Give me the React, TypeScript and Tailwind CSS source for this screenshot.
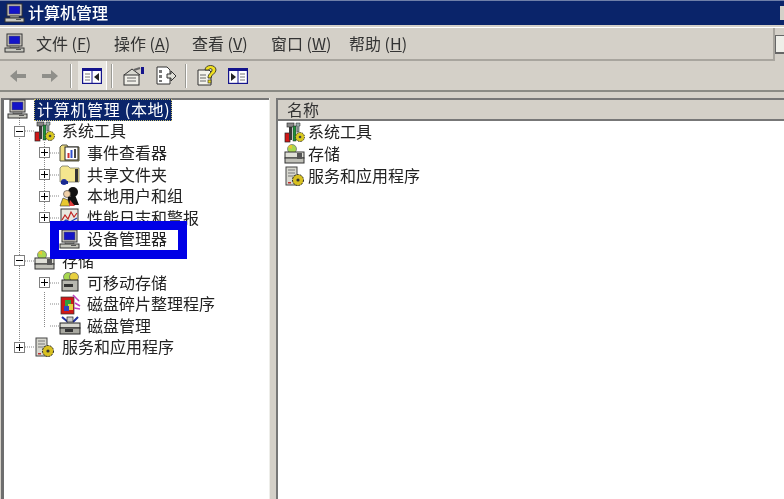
// Computer Management window, Windows 2003 style, with device manager highlighted
import React from "react";

const FONT = "font-['Noto_Sans_CJK_SC','Liberation_Sans',sans-serif]";

function ComputerIcon() {
  return (
    <svg width="22" height="21" viewBox="0 0 22 21" className="shrink-0">
      <rect x="3" y="1" width="15" height="12" fill="#d4d0c8" stroke="#333" />
      <rect x="5" y="3" width="11" height="8" fill="#1414c8" stroke="#555" strokeWidth="0.6" />
      <rect x="6" y="13" width="9" height="2" fill="#999" stroke="#444" strokeWidth="0.5" />
      <rect x="1" y="15" width="19" height="4" fill="#c8c8c0" stroke="#333" />
      <rect x="12" y="16" width="5" height="1" fill="#555" />
    </svg>
  );
}

function ToolsIcon() {
  return (
    <svg width="22" height="21" viewBox="0 0 22 21" className="shrink-0">
      <rect x="1" y="11" width="5" height="9" fill="#d01818" stroke="#222" strokeWidth="0.7" />
      <rect x="5" y="2" width="3" height="16" fill="#3a3a3a" />
      <rect x="3" y="1" width="7" height="4" fill="#888" stroke="#222" strokeWidth="0.6" />
      <rect x="9" y="4" width="3" height="15" fill="#1f8f3a" stroke="#222" strokeWidth="0.5" />
      <path d="M12 1h4v3h-1v6h-2V4h-1z" fill="#9aa" stroke="#222" strokeWidth="0.5" />
      <circle cx="16" cy="15" r="4.5" fill="#d8c820" stroke="#333" strokeDasharray="1.5 1" />
      <circle cx="16" cy="15" r="1.3" fill="#444" />
    </svg>
  );
}

function EventIcon() {
  return (
    <svg width="22" height="21" viewBox="0 0 22 21" className="shrink-0">
      <path d="M1 5l2-2h5l1 2h11v14H1z" fill="#f0de80" stroke="#554" />
      <rect x="6" y="5" width="13" height="13" fill="#fff" stroke="#222" />
      <rect x="8.5" y="11" width="2" height="5" fill="#d03030" />
      <rect x="11.5" y="8" width="2" height="8" fill="#3050d0" />
      <rect x="15" y="7" width="2" height="9" fill="#444" />
    </svg>
  );
}

function FolderIcon() {
  return (
    <svg width="22" height="21" viewBox="0 0 22 21" className="shrink-0">
      <path d="M1 4l2-2h6l2 2h9v14H1z" fill="#f4e68e" stroke="#776" strokeWidth="0.8" />
      <rect x="16" y="5" width="3" height="13" fill="#333" />
      <circle cx="5" cy="18" r="3" fill="#2030a0" />
      <rect x="2" y="17" width="7" height="3" fill="#1a2a90" />
    </svg>
  );
}

function UsersIcon() {
  return (
    <svg width="22" height="21" viewBox="0 0 22 21" className="shrink-0">
      <circle cx="14" cy="6" r="5" fill="#111" />
      <circle cx="8" cy="8" r="3.5" fill="#f0d0a8" stroke="#333" strokeWidth="0.6" />
      <path d="M9 11l7-2 4 10H8z" fill="#111" />
      <path d="M1 20l3-8 5 2 2 6z" fill="#e8c830" stroke="#333" strokeWidth="0.6" />
      <path d="M11 14l5 6h-6z" fill="#e04040" />
    </svg>
  );
}

function PerfIcon() {
  return (
    <svg width="22" height="21" viewBox="0 0 22 21" className="shrink-0">
      <rect x="2" y="2" width="17" height="17" fill="#e8e8e0" stroke="#333" />
      <path d="M3 13l3-5 3 4 3-7 3 5 3-4" fill="none" stroke="#c02020" strokeWidth="1.2" />
      <path d="M3 16l4-3 4 2 7-4" fill="none" stroke="#2040b0" strokeWidth="1.2" />
    </svg>
  );
}

function StorageIcon() {
  return (
    <svg width="22" height="21" viewBox="0 0 22 21" className="shrink-0">
      <circle cx="8" cy="5" r="4.5" fill="#a8d850" stroke="#667" strokeWidth="0.7" />
      <path d="M4 3a4 4 0 0 1 4-2v4z" fill="#e8c830" />
      <rect x="1" y="8" width="19" height="6" fill="#e0e0d8" stroke="#333" />
      <rect x="1" y="14" width="19" height="5" fill="#c0c0b8" stroke="#333" />
      <rect x="13" y="9" width="5" height="6" fill="#555" />
    </svg>
  );
}

function RemovableIcon() {
  return (
    <svg width="22" height="21" viewBox="0 0 22 21" className="shrink-0">
      <circle cx="9" cy="5" r="4.5" fill="#a8d850" stroke="#556" strokeWidth="0.7" />
      <circle cx="15" cy="5" r="4.5" fill="#e8d040" stroke="#556" strokeWidth="0.7" />
      <rect x="3" y="8" width="16" height="11" fill="#b8b8b0" stroke="#222" />
      <rect x="5" y="12" width="9" height="3" fill="#333" />
    </svg>
  );
}

function DefragIcon() {
  return (
    <svg width="22" height="21" viewBox="0 0 22 21" className="shrink-0">
      <rect x="2" y="3" width="13" height="17" fill="#d01818" stroke="#333" strokeWidth="0.7" />
      <rect x="6" y="6" width="6" height="6" fill="#30a040" />
      <rect x="9" y="10" width="5" height="6" fill="#e8d040" />
      <rect x="5" y="12" width="5" height="5" fill="#3040c0" />
      <path d="M14 1l6 6M16 9l5 3M15 14l6 1" stroke="#c040c0" strokeWidth="1.6" />
    </svg>
  );
}

function DiskIcon() {
  return (
    <svg width="22" height="21" viewBox="0 0 22 21" className="shrink-0">
      <path d="M3 2l6 5M19 2l-5 5" stroke="#2030a0" strokeWidth="2" />
      <rect x="8" y="2" width="6" height="5" fill="#ccc" stroke="#222" strokeWidth="0.7" />
      <rect x="1" y="8" width="20" height="5" fill="#d8d8d0" stroke="#222" />
      <rect x="1" y="13" width="20" height="6" fill="#a8a8a0" stroke="#222" />
      <rect x="6" y="14" width="8" height="3" fill="#333" />
    </svg>
  );
}

function ServicesIcon() {
  return (
    <svg width="22" height="21" viewBox="0 0 22 21" className="shrink-0">
      <rect x="2" y="1" width="11" height="18" fill="#d8d8d0" stroke="#444" />
      <path d="M4 4h7M4 7h7M4 10h7" stroke="#777" />
      <circle cx="14" cy="14" r="5.5" fill="#d8c020" stroke="#222" strokeDasharray="2 1" />
      <circle cx="14" cy="14" r="1.6" fill="#333" />
      <rect x="4" y="16" width="3" height="1.5" fill="#c03030" />
    </svg>
  );
}

function Expander({ open }: { open?: boolean }) {
  return (
    <span className="relative flex h-[11px] w-[11px] shrink-0 items-center justify-center border border-[#808080] bg-white">
      <span className="absolute h-px w-[7px] bg-black" />
      {!open && <span className="absolute h-[7px] w-px bg-black" />}
    </span>
  );
}

const MENU = [
  { label: "文件", key: "F", width: "w-[78px]" },
  { label: "操作", key: "A", width: "w-[78px]" },
  { label: "查看", key: "V", width: "w-[79px]" },
  { label: "窗口", key: "W", width: "w-[78px]" },
  { label: "帮助", key: "H", width: "w-[78px]" },
];

interface TreeRow {
  label: string;
  icon: React.ReactNode;
  level: 1 | 2;
  expander?: "open" | "closed";
}

const TREE: TreeRow[] = [
  { label: "系统工具", icon: <ToolsIcon />, level: 1, expander: "open" },
  { label: "事件查看器", icon: <EventIcon />, level: 2, expander: "closed" },
  { label: "共享文件夹", icon: <FolderIcon />, level: 2, expander: "closed" },
  { label: "本地用户和组", icon: <UsersIcon />, level: 2, expander: "closed" },
  { label: "性能日志和警报", icon: <PerfIcon />, level: 2, expander: "closed" },
  { label: "设备管理器", icon: <ComputerIcon />, level: 2 },
  { label: "存储", icon: <StorageIcon />, level: 1, expander: "open" },
  { label: "可移动存储", icon: <RemovableIcon />, level: 2, expander: "closed" },
  { label: "磁盘碎片整理程序", icon: <DefragIcon />, level: 2 },
  { label: "磁盘管理", icon: <DiskIcon />, level: 2 },
  { label: "服务和应用程序", icon: <ServicesIcon />, level: 1, expander: "closed" },
];

function Row({ row }: { row: TreeRow }) {
  return (
    <div className={row.level === 1 ? "flex h-[21.6px] items-center pl-[9px]" : "flex h-[21.6px] items-center pl-[34px]"}>
      <span className="flex w-[20px] shrink-0 items-center">
        {row.expander && <Expander open={row.expander === "open"} />}
      </span>
      <span className="flex w-[28px] shrink-0 items-center">{row.icon}</span>
      <span className="block whitespace-nowrap pb-[2px]">{row.label}</span>
    </div>
  );
}

function Separator({ className }: { className: string }) {
  return <div className={`h-[24px] w-[2px] border-r border-white bg-[#9a9a94] ${className}`} />;
}

export default function App() {
  return (
    <div className={`${FONT} flex h-[499px] w-[784px] flex-col overflow-hidden bg-[#d4d0c8] text-[16px] leading-none text-[#222] blur-[0.4px]`}>
      {/* title bar */}
      <div className="flex h-[25px] shrink-0 items-center justify-between border-t border-[#6f7fa8] bg-[#0a246a] pl-[4px] text-white">
        <div className="flex items-center gap-[2px]">
          <ComputerIcon />
          <span className="block pb-[3px] font-medium">计算机管理</span>
        </div>
        <div className="h-[14px] w-[4px] bg-[#d4d0c8]" />
      </div>

      {/* menu bar */}
      <div className="mt-[2px] flex h-[34px] shrink-0 border-t border-white">
        <div className="flex flex-1 items-center border-b-2 border-r-2 border-[#a8a59e] pl-[4px]">
          <ComputerIcon />
          <div className="ml-[10px] flex pb-[2px]">
            {MENU.map((m) => (
              <span key={m.key} className={`${m.width} block whitespace-nowrap text-[#333]`}>
                {m.label} (<u className="underline underline-offset-1">{m.key}</u>)
              </span>
            ))}
          </div>
        </div>
        <div className="flex w-[9px] items-end pb-[7px]">
          <div className="h-[19px] w-full border-b-2 border-l border-t border-[#666] bg-[#eeeee8]" />
        </div>
      </div>

      {/* toolbar */}
      <div className="flex h-[31px] shrink-0 items-center border-b-2 border-[#8a8a84] pl-[9px]">
        <svg width="18" height="14" viewBox="0 0 18 14" className="shrink-0">
          <path d="M8 1L1 7l7 6V9h9V5H8z" fill="#8f8f8a" />
        </svg>
        <svg width="18" height="14" viewBox="0 0 18 14" className="ml-[14px] shrink-0">
          <path d="M10 1l7 6-7 6V9H1V5h9z" fill="#8f8f8a" />
        </svg>
        <Separator className="ml-[11px]" />
        <div className="ml-[6px] flex h-[29px] w-[29px] items-center justify-center border-r border-white bg-[#e8e6e0]">
          <svg width="20" height="16" viewBox="0 0 20 16">
            <rect x="0.5" y="0.5" width="19" height="15" fill="#fff" stroke="#14148c" strokeWidth="1.4" />
            <rect x="1" y="1" width="18" height="2" fill="#14148c" />
            <path d="M10 3v12" stroke="#14148c" />
            <path d="M3 6h5M3 9h5M3 12h5" stroke="#777" />
            <path d="M17 5v8l-5-4z" fill="#222" />
          </svg>
        </div>
        <Separator className="ml-[4px]" />
        <svg width="23" height="20" viewBox="0 0 23 20" className="ml-[9px] shrink-0">
          <path d="M2 9l8-6 8 6" fill="#d8d8d0" stroke="#333" />
          <rect x="2" y="9" width="15" height="10" fill="#f0efe8" stroke="#333" />
          <path d="M5 12h9M5 15h9" stroke="#666" />
          <path d="M12 4l6-2" stroke="#666" strokeWidth="2" />
          <rect x="19" y="1" width="3" height="7" fill="#14148c" />
        </svg>
        <svg width="20" height="19" viewBox="0 0 20 19" className="ml-[11px] shrink-0">
          <path d="M1 1h10l3 3v14H1z" fill="#fff" stroke="#333" />
          <rect x="3" y="4" width="3" height="3" fill="#777" />
          <rect x="3" y="9" width="3" height="3" fill="#777" />
          <rect x="3" y="14" width="3" height="2" fill="#777" />
          <path d="M11 8h4V5l5 5-5 5v-3h-4z" fill="#e0e0d8" stroke="#333" />
        </svg>
        <Separator className="ml-[9px]" />
        <svg width="20" height="21" viewBox="0 0 20 21" className="ml-[10px] shrink-0">
          <path d="M1 5h11l2 2v13H1z" fill="#f4f3ec" stroke="#333" />
          <path d="M3 10h6M3 13h6M3 16h6" stroke="#666" />
          <path d="M8 5c0-6 11-6 11 0 0 4-5 4-5 8h-3c0-5 4-5 4-8 0-2-3-2-3 0z" fill="#f0e020" stroke="#222" strokeWidth="0.8" />
          <rect x="11" y="15" width="3" height="3" fill="#f0e020" stroke="#222" strokeWidth="0.6" />
        </svg>
        <svg width="20" height="16" viewBox="0 0 20 16" className="ml-[11px] shrink-0">
          <rect x="0.5" y="0.5" width="19" height="15" fill="#fff" stroke="#14148c" strokeWidth="1.4" />
          <rect x="1" y="1" width="18" height="2" fill="#14148c" />
          <path d="M10 3v12" stroke="#14148c" />
          <path d="M12 6h5M12 9h5M12 12h5" stroke="#777" />
          <path d="M3 5v8l5-4z" fill="#222" />
        </svg>
      </div>

      {/* panes */}
      <div className="mt-[6px] flex min-h-0 flex-1 pl-[1px]">
        {/* tree pane */}
        <div className="relative w-[268px] shrink-0 border-l-[3px] border-t-2 border-l-[#6e6e6e] border-t-[#777] bg-white pl-[1px]">
          <svg width="264" height="399" className="absolute left-[1px] top-0" fill="none" stroke="#888" strokeDasharray="1 1">
            <path d="M14.5 18V247M39.5 42V124M39.5 192V227M20 31h10M45 53h10M45 75h10M45 96h10M45 118h10M45 139h10M45 183h10M45 204h10M45 226h10M20 161h10M20 247h10" />
          </svg>
          <div className="relative -mt-[1px]">
            <div className="flex h-[21.6px] items-center pl-[2px]">
              <span className="flex w-[27px] shrink-0 items-center"><ComputerIcon /></span>
              <span className="block w-[138px] whitespace-nowrap border border-dotted border-[#c8c070] bg-[#0a246a] pb-[3px] pl-[2px] pt-[1px] tracking-[0.7px] text-white">
                计算机管理 (本地)
              </span>
            </div>
            {TREE.map((row) => (
              <Row key={row.label} row={row} />
            ))}
          </div>
          {/* blue annotation box */}
          <div className="absolute left-[46px] top-[121px] h-[38px] w-[137px] border-[9px] border-[#0000e6]" />
        </div>

        {/* splitter */}
        <div className="w-[7px] shrink-0 border-l border-[#eeeeea] bg-[#d4d0c8]" />

        {/* list pane */}
        <div className="min-w-0 flex-1 border-l-2 border-t-2 border-[#777] bg-white">
          <div className="flex h-[21px] items-center border-b-2 border-[#777] bg-[#d4d0c8] pl-[9px] text-[#333]">
            <span className="block pb-[2px]">名称</span>
          </div>
          <div className="pl-[6px]">
            <div className="flex h-[22px] items-center gap-[2px]"><ToolsIcon /><span className="block pb-[2px]">系统工具</span></div>
            <div className="flex h-[22px] items-center gap-[2px]"><StorageIcon /><span className="block pb-[2px]">存储</span></div>
            <div className="flex h-[22px] items-center gap-[2px]"><ServicesIcon /><span className="block pb-[2px]">服务和应用程序</span></div>
          </div>
        </div>
      </div>
    </div>
  );
}
